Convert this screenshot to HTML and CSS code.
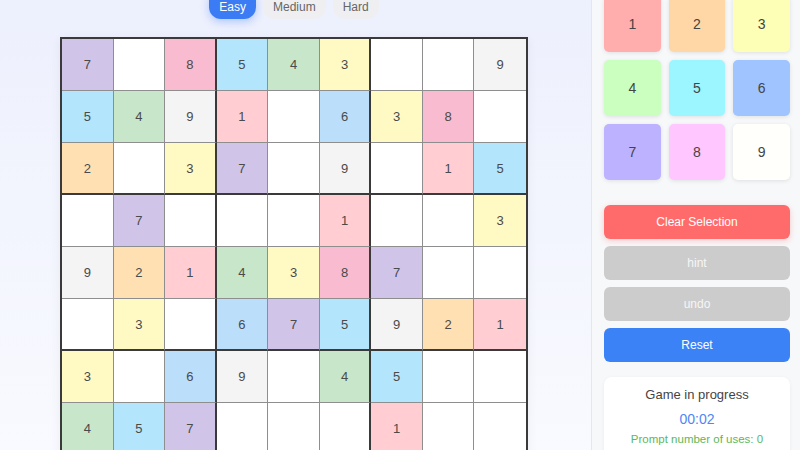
FILE: index.html
```html
<!DOCTYPE html>
<html>
<head>
<meta charset="utf-8">
<link rel="stylesheet" href="styles.css">
</head>
<body>
<div class="app">
  <main class="main">
    <div class="levels">
      <button class="level active">Easy</button>
      <button class="level">Medium</button>
      <button class="level">Hard</button>
    </div>
    <div class="board">
      <div class="cell c7">7</div><div class="cell"></div><div class="cell c8 bx">8</div><div class="cell c5">5</div><div class="cell c4">4</div><div class="cell c3 bx">3</div><div class="cell"></div><div class="cell"></div><div class="cell c9 last">9</div>
      <div class="cell c5">5</div><div class="cell c4">4</div><div class="cell c9 bx">9</div><div class="cell c1">1</div><div class="cell"></div><div class="cell c6 bx">6</div><div class="cell c3">3</div><div class="cell c8">8</div><div class="cell last"></div>
      <div class="cell c2 by">2</div><div class="cell by"></div><div class="cell c3 bx by">3</div><div class="cell c7 by">7</div><div class="cell by"></div><div class="cell c9 bx by">9</div><div class="cell by"></div><div class="cell c1 by">1</div><div class="cell c5 by last">5</div>
      <div class="cell"></div><div class="cell c7">7</div><div class="cell bx"></div><div class="cell"></div><div class="cell"></div><div class="cell c1 bx">1</div><div class="cell"></div><div class="cell"></div><div class="cell c3 last">3</div>
      <div class="cell c9">9</div><div class="cell c2">2</div><div class="cell c1 bx">1</div><div class="cell c4">4</div><div class="cell c3">3</div><div class="cell c8 bx">8</div><div class="cell c7">7</div><div class="cell"></div><div class="cell last"></div>
      <div class="cell by"></div><div class="cell c3 by">3</div><div class="cell bx by"></div><div class="cell c6 by">6</div><div class="cell c7 by">7</div><div class="cell c5 bx by">5</div><div class="cell c9 by">9</div><div class="cell c2 by">2</div><div class="cell c1 by last">1</div>
      <div class="cell c3">3</div><div class="cell"></div><div class="cell c6 bx">6</div><div class="cell c9">9</div><div class="cell"></div><div class="cell c4 bx">4</div><div class="cell c5">5</div><div class="cell"></div><div class="cell last"></div>
      <div class="cell c4">4</div><div class="cell c5">5</div><div class="cell c7 bx">7</div><div class="cell"></div><div class="cell"></div><div class="cell bx"></div><div class="cell c1">1</div><div class="cell"></div><div class="cell last"></div>
      <div class="cell"></div><div class="cell"></div><div class="cell bx"></div><div class="cell"></div><div class="cell"></div><div class="cell bx"></div><div class="cell"></div><div class="cell"></div><div class="cell last"></div>
    </div>
  </main>
  <aside class="side">
    <div class="pad">
      <button class="num n1">1</button>
      <button class="num n2">2</button>
      <button class="num n3">3</button>
      <button class="num n4">4</button>
      <button class="num n5">5</button>
      <button class="num n6">6</button>
      <button class="num n7">7</button>
      <button class="num n8">8</button>
      <button class="num n9">9</button>
    </div>
    <div class="actions">
      <button class="act clear">Clear Selection</button>
      <button class="act muted">hint</button>
      <button class="act muted">undo</button>
      <button class="act reset">Reset</button>
    </div>
    <div class="status">
      <div class="st-title">Game in progress</div>
      <div class="st-time">00:02</div>
      <div class="st-hint">Prompt number of uses: 0</div>
    </div>
  </aside>
</div>
</body>
</html>
```
FILE: styles.css
```css
html, body {
  margin: 0;
  padding: 0;
  height: 100%;
  overflow: hidden;
}
body {
  font-family: "Liberation Sans", Arial, sans-serif;
  background: linear-gradient(180deg, #edf0fd 0%, #f9faff 100%);
}
button {
  font-family: "Liberation Sans", Arial, sans-serif;
  border: none;
  cursor: pointer;
}
.app {
  display: flex;
  height: 450px;
}
.main {
  flex: 1;
  display: flex;
  flex-direction: column;
  align-items: center;
  padding-right: 3px;
}
.levels {
  display: flex;
  gap: 7px;
  margin-top: -11px;
  height: 30px;
}
.level {
  height: 30px;
  padding: 0 10px;
  border-radius: 12px;
  font-size: 12px;
  color: #666;
  background: #efeff2;
  padding-top: 5px;
}
.level.active {
  background: #3b7cf4;
  color: #fff;
  box-shadow: 0 3px 8px rgba(59, 124, 244, 0.35);
}
.board {
  margin-top: 18px;
  display: grid;
  grid-template-columns: repeat(9, 1fr);
  grid-auto-rows: 52px;
  width: 464px;
  border: 2px solid #3a3a3a;
  background: #fff;
  box-shadow: 0 2px 10px rgba(0, 0, 0, 0.06);
}
.cell {
  display: flex;
  align-items: center;
  justify-content: center;
  font-size: 13px;
  color: #4a4a4a;
  border-right: 1px solid #8e8e8e;
  border-bottom: 1px solid #8e8e8e;
  background: #fff;
}
.cell.bx { border-right: 2px solid #3a3a3a; }
.cell.by { border-bottom: 2px solid #3a3a3a; }
.cell.last { border-right: none; }
.c1 { background: #ffcdd2; }
.c2 { background: #ffe0b2; }
.c3 { background: #fff9c4; }
.c4 { background: #c8e6c9; }
.c5 { background: #b3e5fc; }
.c6 { background: #bbdefb; }
.c7 { background: #d1c4e9; }
.c8 { background: #f8bbd0; }
.c9 { background: #f4f4f4; }

.side {
  width: 186px;
  padding: 0 10px 0 12px;
  background: #f7f8fa;
  border-left: 1px solid #e6e7ea;
  display: flex;
  flex-direction: column;
}
.pad {
  display: grid;
  grid-template-columns: repeat(3, 1fr);
  gap: 8px;
  margin-top: -4px;
}
.num {
  height: 56px;
  border-radius: 5px;
  font-size: 14px;
  color: #444;
  box-shadow: 0 1px 4px rgba(0, 0, 0, 0.1);
}
.n1 { background: #ffadad; }
.n2 { background: #ffd6a5; }
.n3 { background: #fdffb6; }
.n4 { background: #caffbf; }
.n5 { background: #9bf6ff; }
.n6 { background: #a0c4ff; }
.n7 { background: #bdb2ff; }
.n8 { background: #ffc6ff; }
.n9 { background: #fffffc; }
.actions {
  display: flex;
  flex-direction: column;
  gap: 7px;
  margin-top: 25px;
}
.act {
  height: 34px;
  border-radius: 6px;
  font-size: 12px;
  color: #fff;
}
.clear {
  background: #ff6b6b;
  box-shadow: 0 2px 6px rgba(255, 107, 107, 0.3);
}
.muted {
  background: #cccccc;
  color: #f6f6f6;
}
.reset {
  background: #3b82f6;
}
.status {
  margin-top: 15px;
  background: #fff;
  border-radius: 8px;
  padding: 10px 0 14px;
  text-align: center;
  box-shadow: 0 1px 4px rgba(0, 0, 0, 0.05);
}
.st-title {
  font-size: 13px;
  color: #444;
  line-height: 16px;
}
.st-time {
  margin-top: 8px;
  font-size: 14px;
  color: #4f86f7;
  line-height: 16px;
}
.st-hint {
  margin-top: 5px;
  font-size: 11.5px;
  color: #5cb85c;
  line-height: 14px;
}
```
